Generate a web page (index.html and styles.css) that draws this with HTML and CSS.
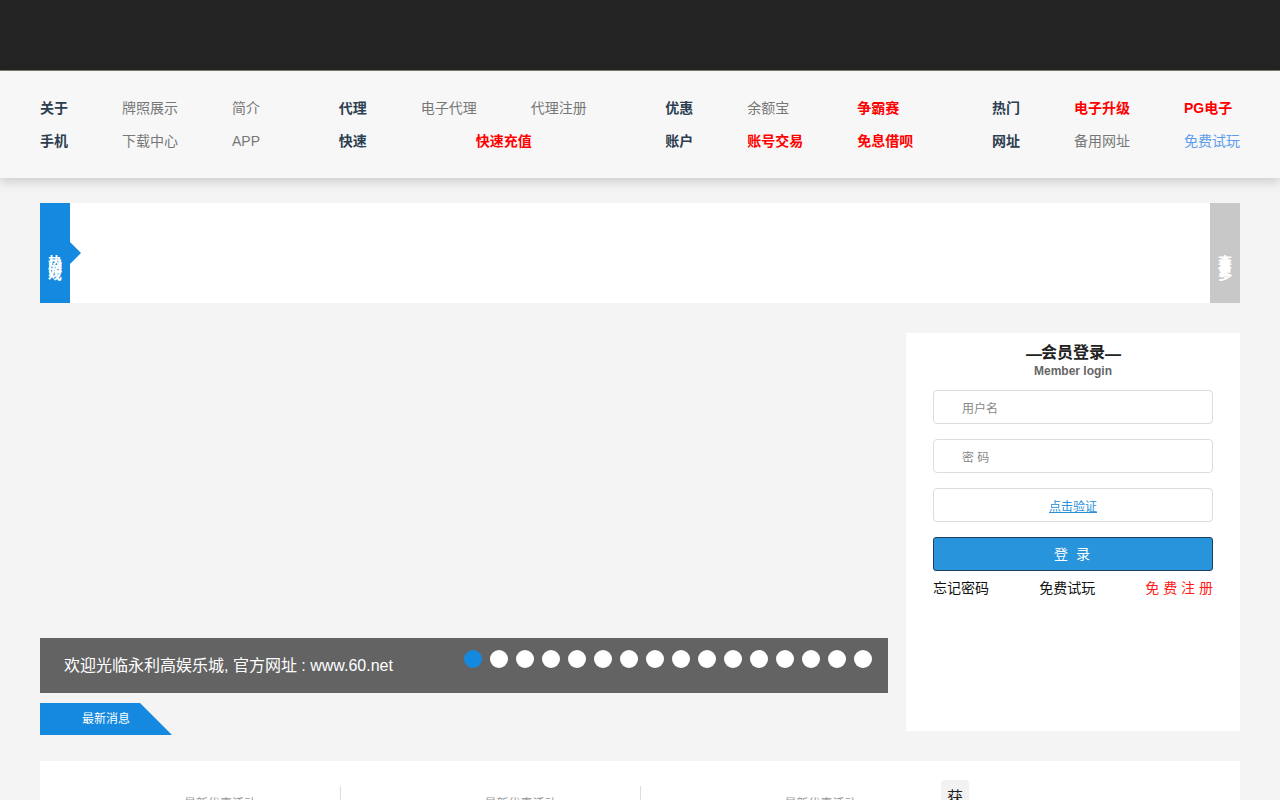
FILE: index.html
```html
<!DOCTYPE html>
<html lang="zh-CN">
<head>
<meta charset="utf-8">
<title>永利高娱乐城</title>
<link rel="stylesheet" href="styles.css">
</head>
<body>
<div class="topbar"></div>
<div class="nav">
  <div class="nav-inner">
    <div class="group">
      <a class="lbl">关于</a><a class="it">牌照展示</a><a class="it">简介</a>
      <a class="lbl">手机</a><a class="it">下载中心</a><a class="it">APP</a>
    </div>
    <div class="group">
      <a class="lbl">代理</a><a class="it">电子代理</a><a class="it">代理注册</a>
      <a class="lbl">快速</a><a class="it red span2">快速充值</a>
    </div>
    <div class="group">
      <a class="lbl">优惠</a><a class="it">余额宝</a><a class="it red">争霸赛</a>
      <a class="lbl">账户</a><a class="it red">账号交易</a><a class="it red">免息借呗</a>
    </div>
    <div class="group">
      <a class="lbl">热门</a><a class="it red">电子升级</a><a class="it red">PG电子</a>
      <a class="lbl">网址</a><a class="it">备用网址</a><a class="it blue">免费试玩</a>
    </div>
  </div>
</div>

<div class="banner">
  <div class="tab-left"><span class="vtext">热门游戏</span></div>
  <div class="banner-body"></div>
  <div class="tab-right"><span class="vtext">查看更多</span></div>
</div>

<div class="main">
  <div class="slider-col">
    <div class="slider">
      <div class="caption">
        <span class="caption-text">欢迎光临永利高娱乐城, 官方网址 : www.60.net</span>
        <div class="dots">
          <i class="dot active"></i><i class="dot"></i><i class="dot"></i><i class="dot"></i>
          <i class="dot"></i><i class="dot"></i><i class="dot"></i><i class="dot"></i>
          <i class="dot"></i><i class="dot"></i><i class="dot"></i><i class="dot"></i>
          <i class="dot"></i><i class="dot"></i><i class="dot"></i><i class="dot"></i>
        </div>
      </div>
    </div>
    <div class="news-tab">最新消息</div>
  </div>
  <div class="login">
    <div class="login-title"><span class="dash">—</span>会员登录<span class="dash">—</span></div>
    <div class="login-sub">Member login</div>
    <div class="field"><span class="ph">用户名</span></div>
    <div class="field"><span class="ph">密 码</span></div>
    <div class="field center"><a class="verify">点击验证</a></div>
    <div class="btn">登 录</div>
    <div class="login-links">
      <a class="ll">忘记密码</a>
      <a class="ll">免费试玩</a>
      <a class="ll reg">免 费 注 册</a>
    </div>
  </div>
</div>

<div class="bottom">
  <div class="bcol"><span class="btext">最新优惠活动</span></div>
  <div class="bcol line"><span class="btext">最新优惠活动</span></div>
  <div class="bcol line"><span class="btext">最新优惠活动</span></div>
  <div class="bcol last"><span class="tile">获</span></div>
</div>
</body>
</html>
```

FILE: styles.css
```css
* { box-sizing: border-box; }
html, body { margin: 0; padding: 0; }
body {
  background: #f4f4f4;
  font-family: "Liberation Sans", "Noto Sans CJK SC", sans-serif;
  font-size: 14px;
  color: #333;
  overflow: hidden;
}
a { text-decoration: none; cursor: pointer; }

.topbar {
  height: 71px;
  background: #242424;
  border-bottom: 1px solid #7d7d6b;
}

.nav {
  background: #f7f7f7;
  height: 107px;
  box-shadow: 0 4px 10px rgba(0, 0, 0, 0.16);
  position: relative;
}
.nav-inner {
  width: 1200px;
  margin: 0 auto;
  padding-top: 27px;
  display: flex;
  justify-content: space-between;
}
.group {
  display: grid;
  grid-template-columns: 82px 110px auto;
  row-gap: 13px;
}
.group a { line-height: 20px; font-size: 14px; white-space: nowrap; }
.lbl { color: #2c3e50; font-weight: bold; }
.it { color: #777; }
.it.red { color: #ff0000; font-weight: bold; }
.it.blue { color: #5d9cec; }
.span2 { grid-column: 2 / 4; text-align: center; }

.banner {
  width: 1200px;
  height: 100px;
  margin: 25px auto 0;
  display: flex;
}
.tab-left, .tab-right {
  width: 30px;
  display: flex;
  justify-content: center;
  align-items: flex-start;
  padding-top: 57px;
}
.tab-left { background: #1589e0; position: relative; }
.tab-left::after {
  content: "";
  position: absolute;
  left: 30px;
  top: 39px;
  border-left: 11px solid #1589e0;
  border-top: 11px solid transparent;
  border-bottom: 11px solid transparent;
}
.tab-right { background: #c8c8c8; }
.banner-body { flex: 1; background: #fff; }
.vtext {
  display: block;
  width: 14px;
  font-size: 14px;
  line-height: 4px;
  color: #fff;
  font-weight: bold;
  word-break: break-all;
}

.main {
  width: 1200px;
  margin: 30px auto 0;
  display: flex;
  gap: 18px;
  align-items: flex-start;
}
.slider-col { width: 848px; }
.slider {
  height: 360px;
  display: flex;
  flex-direction: column;
  justify-content: flex-end;
}
.caption {
  height: 55px;
  background: #636363;
  display: flex;
  align-items: flex-start;
}
.caption-text {
  color: #fff;
  font-size: 16px;
  line-height: 20px;
  padding: 18px 0 0 24px;
}
.dots {
  margin-left: auto;
  padding: 12px 16px 0 0;
  display: flex;
  gap: 8px;
}
.dot {
  width: 18px;
  height: 18px;
  border-radius: 50%;
  background: #fff;
  display: block;
}
.dot.active { background: #1589e0; }
.news-tab {
  margin-top: 10px;
  width: 132px;
  height: 32px;
  line-height: 32px;
  background: #1589e0;
  clip-path: polygon(0 0, 100px 0, 132px 100%, 0 100%);
  color: #fff;
  font-size: 12px;
  padding-left: 42px;
}

.login {
  width: 334px;
  height: 398px;
  background: #fff;
  padding: 10px 27px 0;
}
.login-title {
  text-align: center;
  font-size: 16px;
  font-weight: bold;
  line-height: 20px;
  color: #222;
}
.dash { display: inline-block; width: 15px; position: relative; top: 2px; }
.login-sub {
  text-align: center;
  font-size: 12px;
  font-weight: bold;
  line-height: 16px;
  color: #666;
  margin-bottom: 11px;
}
.field {
  height: 34px;
  border: 1px solid #ddd;
  border-radius: 4px;
  margin-bottom: 15px;
  padding-left: 28px;
  display: flex;
  align-items: center;
}
.field.center { justify-content: center; padding-left: 0; }
.ph { font-size: 12px; color: #888; }
.verify { font-size: 12px; color: #2a8fd8; text-decoration: underline; }
.btn {
  height: 34px;
  background: #2894dc;
  border: 1px solid #1f3d5c;
  border-radius: 3px;
  color: #fff;
  text-align: center;
  line-height: 32px;
  font-size: 14px;
  letter-spacing: 2px;
}
.login-links {
  margin-top: 7px;
  display: flex;
  justify-content: space-between;
  line-height: 20px;
}
.ll { color: #111; font-size: 14px; }
.ll.reg { color: #ff1a1a; }

.bottom {
  width: 1200px;
  margin: 26px auto 0;
  background: #fff;
  height: 120px;
  display: flex;
  padding-top: 25px;
}
.bcol {
  width: 300px;
  height: 60px;
  display: flex;
  justify-content: center;
  padding-left: 60px;
  padding-top: 10px;
}
.bcol.line { border-left: 1px solid #ddd; }
.btext { font-size: 12px; color: #999; line-height: 16px; }
.bcol.last { justify-content: flex-start; padding: 0 0 0 1px; margin-top: -6px; }
.tile {
  display: block;
  width: 28px;
  height: 40px;
  background: #f2f2f2;
  border-radius: 4px;
  font-size: 16px;
  line-height: 16px;
  padding-top: 10px;
  text-align: center;
  color: #222;
}
```
